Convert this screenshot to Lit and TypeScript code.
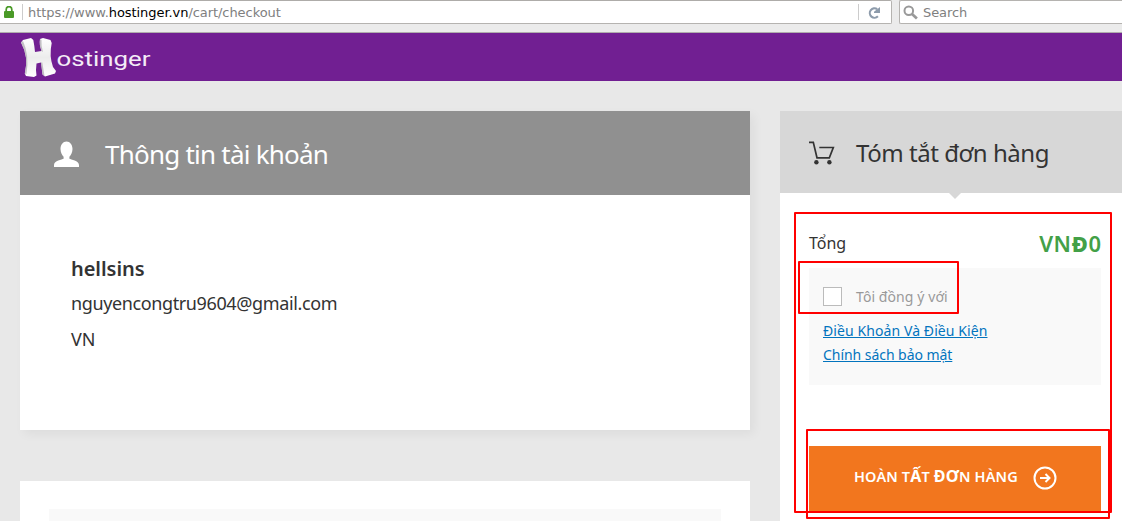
import { LitElement, html, css } from "lit";
import { customElement } from "lit/decorators.js";

@customElement("browser-bar")
class BrowserBar extends LitElement {
  static styles = css`
    :host { display: flex; height: 32px; background: #ebebeb; border-bottom: 1px solid #b0adad; font: 13px/23px "DejaVu Sans", sans-serif; color: #808080; white-space: pre; }
    .url { box-sizing: border-box; width: 892px; height: 24px; display: flex; align-items: center; background: #fff; border: 1px solid #b5b3b0; border-left: 0; border-top-color: #aeaca9; border-radius: 0 2px 2px 0; padding-left: 4px; }
    .search { box-sizing: border-box; width: 223px; height: 24px; margin-left: 7px; display: flex; align-items: center; background: #fff; border: 1px solid #b5b3b0; border-right: 0; border-radius: 2px 0 0 2px; padding-left: 3px; }
    .sep { width: 1px; height: 16px; background: #ccc; }
    .address { margin-left: 5px; flex: 1; letter-spacing: -.06px; }
    .host { color: #000; }
    .lock { margin-right: 8px; }
    .reload { margin: 1px 10px 0 9px; }
    .term { margin-left: 5px; letter-spacing: -.1px; }
    svg { display: block; }
  `;
  render() {
    return html`
      <div class="url">
        <svg class="lock" width="10" height="12" viewBox="0 0 10 12"><path d="M2.2 6V3.4a2.8 2.8 0 0 1 5.6 0V6" fill="none" stroke="#4a9a27" stroke-width="1.7"/><rect y="5" width="10" height="7" rx="1" fill="#4a9a27"/></svg>
        <span class="sep"></span>
        <span class="address">https://www.<span class="host">hostinger.vn</span>/cart/checkout</span>
        <span class="sep"></span>
        <svg class="reload" width="13" height="12" viewBox="0 0 13 12"><path d="M9.900 9.300A4.700 4.700 0 1 1 9.200 2.200" fill="none" stroke="#8d9bab" stroke-width="2.1"/><path d="M12 0v6H6V4.800z" fill="#8d9bab"/></svg>
      </div>
      <div class="search">
        <svg width="15" height="15" viewBox="0 0 15 15"><circle cx="5.8" cy="5.8" r="4.3" fill="none" stroke="#999" stroke-width="2"/><path d="M9 9l4.900 4.600" stroke="#999" stroke-width="2.7"/></svg>
        <span class="term">Search</span>
      </div>`;
  }
}

@customElement("site-header")
class SiteHeader extends LitElement {
  static styles = css`
    :host { display: flex; height: 48px; background: #711f92; color: #f4ecf7; }
    .logo { display: flex; padding: 4px 0 0 20px; }
    svg { display: block; }
  `;
  render() {
    return html`<div class="logo" aria-label="Hostinger">
      <svg width="134" height="42" viewBox="0 0 134 42">
        <defs><linearGradient id="g" x2="0" y2="1"><stop offset="0" stop-color="#fff"/><stop offset=".5" stop-color="#ececec"/><stop offset="1" stop-color="#fff"/></linearGradient></defs>
        <path d="M1 5.500 3 3 11 1 13.300 3Q14.500 9 15 15L21.500 14Q19 7 20 2L23 1 30.500 3 31.700 6Q29 19 33 30L36 34 35 36.500 25 39.500 22.500 37.500 21 25.500 16.500 26.500Q15.500 33 16.500 38.500L14 40 6 39 4.800 36.500Q9 20 1 5.500Z" fill="url(#g)"/>
        <path d="M1 5.500 3 4Q9.500 18 6.500 37L4.800 36.500Q9 20 1 5.500ZM20 2 21.500 3Q21 9 23 15L21.500 14Q19 8 20 2ZM21 25.500 22.300 25.500 24.500 39 22.500 37.500Z" fill="#b4b2b6" opacity=".8"/>
        <text x="36.500" y="29" textLength="94" lengthAdjust="spacingAndGlyphs" font-family="Roboto, sans-serif" font-size="20.500" fill="#f4ecf7">ostinger</text>
      </svg></div>`;
  }
}

@customElement("account-card")
class AccountCard extends LitElement {
  static styles = css`
    :host { display: block; height: 319px; background: #fff; box-shadow: 4px 4px 10px rgba(0,0,0,.05); color: #333; }
    .head { height: 84px; display: flex; align-items: center; background: #909090; color: #fff; padding-left: 34px; box-sizing: border-box; }
    .head svg { margin-top: 2px; }
    h2 { margin: 1px 0 0 26px; font-size: 26px; font-weight: 400; line-height: 36px; letter-spacing: -.77px; }
    .body { padding: 56px 51px; font-size: 18px; line-height: 34px; }
    .name { height: 35px; font-size: 20px; line-height: 36px; font-weight: 600; letter-spacing: -.05px; }
    .mail { letter-spacing: -.38px; }
    .line { height: 36px; }
  `;
  render() {
    return html`<div class="head">
        <svg width="25" height="26" viewBox="0 0 25 26"><path d="M12.5.5c3.5 0 6 3.2 6 7.5 0 3.8-1.8 6.2-3.1 7.7v2.1c1.4 1 9.6 1.5 9.6 6.2v2H0v-2c0-4.7 8.2-5.2 9.6-6.2v-2.1C8.300 14.200 6.500 11.800 6.500 8c0-4.300 2.500-7.500 6-7.500z" fill="#fff"/></svg>
        <h2>Thông tin tài khoản</h2></div>
      <div class="body"><div class="name">hellsins</div><div class="line mail">nguyencongtru9604@gmail.com</div><div class="line">VN</div></div>`;
  }
}

@customElement("order-summary")
class OrderSummary extends LitElement {
  static styles = css`
    :host { display: block; background: #fff; color: #333; box-sizing: border-box; }
    .head { position: relative; box-sizing: border-box; height: 82px; background: #d7d7d7; display: flex; align-items: center; padding-left: 29px; }
    .head::after { content: ""; position: absolute; left: 169px; top: 82px; border: 6px solid transparent; border-top-color: #d7d7d7; border-bottom: 0; }
    h2 { margin: 2px 0 0 21px; font-size: 24px; font-weight: 400; line-height: 34px; letter-spacing: -.47px; }
    .body { padding: 35px 21px 0 29px; }
    .total { height: 40px; display: flex; justify-content: space-between; font-size: 16px; line-height: 30px; }
    .price { color: #43a047; font-size: 22px; font-weight: 600; line-height: 30px; letter-spacing: .6px; margin-right: -.6px; }
    .price b { font-weight: 800; }
    .terms { box-sizing: border-box; height: 117px; background: #f9f9f9; padding: 19px 14px; font-size: 14px; line-height: 24px; }
    .agree { display: flex; height: 32px; color: #999; line-height: 19px; letter-spacing: .08px; }
    .box { box-sizing: border-box; width: 19px; height: 19px; border: 1px solid #bbb; background: #fff; margin-right: 14px; }
    a { display: block; width: max-content; color: #0274be; text-decoration: underline; letter-spacing: .09px; }
    .privacy { letter-spacing: -.05px; }
    .cta { width: 292px; height: 65px; margin-top: 61px; display: flex; align-items: center; border: 0; padding: 0 0 0 45px; background: #f2761e; color: #fff; font: 600 14.5px/20px "Noto Sans", sans-serif; letter-spacing: .15px; }
    .cta b { font-weight: 700; font-size: 16px; }
    .cta span { width: 179px; text-align: left; margin-bottom: 5px; white-space: nowrap; }
    svg { flex: none; }
    .cta svg { margin: -1px 0 0 -.5px; }
  `;
  render() {
    return html`<div class="head">
        <svg width="26" height="25" viewBox="0 0 26 25"><path d="M0 2.300h4.300L8 17.800h12.300l4-10.300h-14" fill="none" stroke="#333" stroke-width="1.700"/><circle cx="7.400" cy="22.300" r="2.200" fill="#333"/><circle cx="20.400" cy="22.300" r="2.200" fill="#333"/></svg>
        <h2>Tóm tắt đơn hàng</h2></div>
      <div class="body">
        <div class="total"><span>Tổng</span><span class="price">VN<b>Đ</b>0</span></div>
        <div class="terms"><label class="agree"><span class="box"></span>Tôi đồng ý với</label>
          <a>Điều Khoản Và Điều Kiện</a><a class="privacy">Chính sách bảo mật</a></div>
        <button class="cta"><span>HOÀN T<b>Ấ</b>T <b>ĐƠ</b>N HÀNG</span>
          <svg width="24" height="24" viewBox="0 0 24 24" fill="none" stroke="#fff" stroke-width="2"><circle cx="12" cy="12" r="10.500"/><path d="M7 12h9M12.500 8 16.500 12l-4 4"/></svg></button>
      </div>`;
  }
}

@customElement("app-root")
class AppRoot extends LitElement {
  static styles = css`
    :host { display: block; position: relative; width: 1122px; height: 521px; overflow: hidden; background: #e8e8e8; font-family: "Noto Sans", sans-serif; }
    main { display: grid; grid-template-columns: 730px 342px; column-gap: 30px; padding: 30px 0 0 20px; height: 410px; }
    .left { display: flex; flex-direction: column; gap: 51px; }
    .next { height: 12px; flex: none; background: #fff; padding: 28px 29px 0; }
    .panel { height: 12px; background: #f9f9f9; }
    .mark { position: absolute; box-sizing: border-box; border: 2px solid #f00; border-radius: 1px; }
    .all { left: 794px; top: 212px; width: 318px; height: 301px; }
    .agree { left: 798px; top: 261px; width: 161px; height: 53px; }
    .submit { left: 806px; top: 429px; width: 304px; height: 90px; }
  `;
  render() {
    return html`<browser-bar></browser-bar><site-header></site-header>
      <main><div class="left"><account-card></account-card><div class="next"><div class="panel"></div></div></div>
        <order-summary></order-summary></main>
      <div class="mark all"></div><div class="mark agree"></div><div class="mark submit"></div>`;
  }
}
